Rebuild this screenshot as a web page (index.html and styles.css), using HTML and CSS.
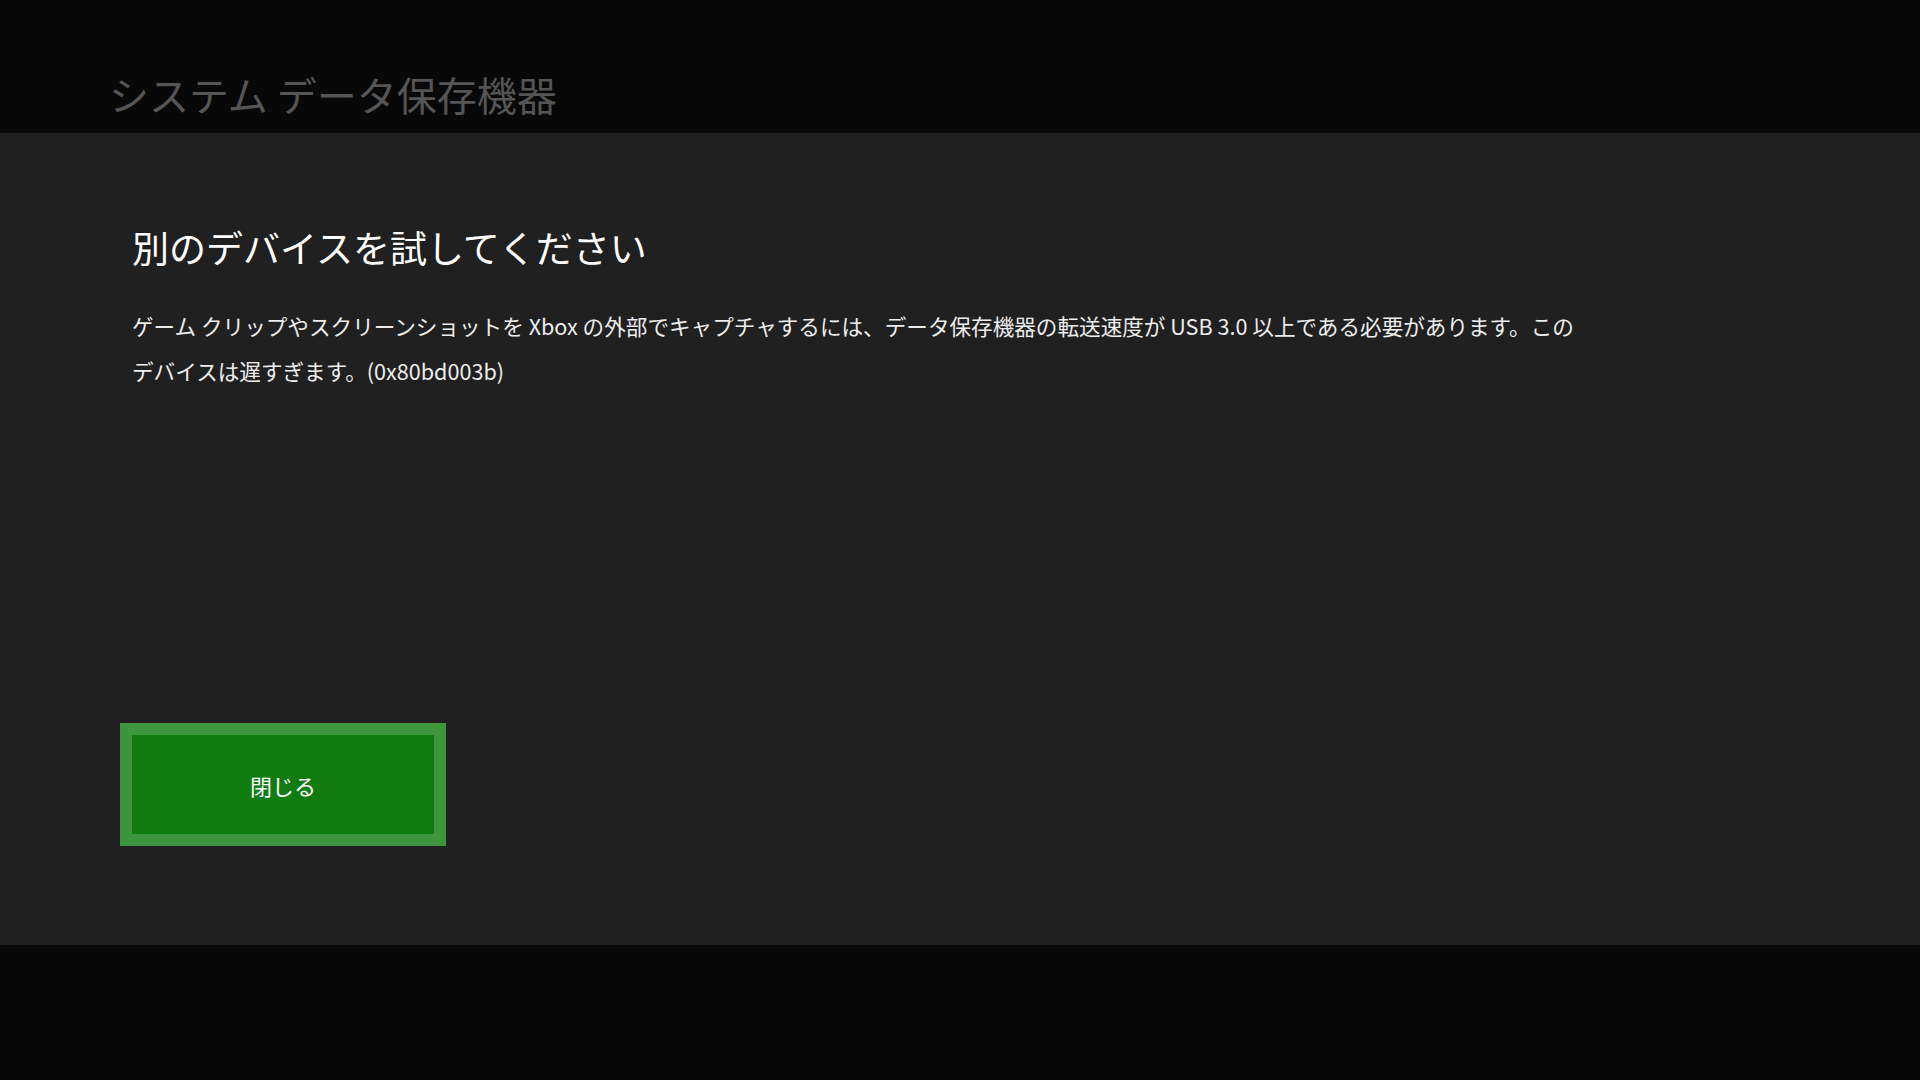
FILE: index.html
```html
<!DOCTYPE html>
<html lang="ja">
<head>
<meta charset="utf-8">
<title>システム データ保存機器</title>
<link rel="stylesheet" href="styles.css">
</head>
<body>
<div class="screen">
  <header class="topbar">
    <h1 class="page-title">システム データ保存機器</h1>
  </header>
  <main class="panel">
    <h2 class="dialog-title">別のデバイスを試してください</h2>
    <p class="dialog-text">ゲーム クリップやスクリーンショットを Xbox の外部でキャプチャするには、データ保存機器の転送速度が USB 3.0 以上である必要があります。この<br>デバイスは遅すぎます。(0x80bd003b)</p>
    <div class="actions">
      <button class="btn-close" type="button"><span class="btn-inner">閉じる</span></button>
    </div>
  </main>
  <footer class="bottombar"></footer>
</div>
</body>
</html>
```

FILE: styles.css
```css
* { box-sizing: border-box; }
html, body {
  margin: 0;
  padding: 0;
  width: 1920px;
  height: 1080px;
  background: #080808;
  overflow: hidden;
}
body {
  font-family: "Noto Sans CJK JP", "Noto Sans", sans-serif;
}
.screen {
  display: flex;
  flex-direction: column;
  width: 1920px;
  height: 1080px;
}
.topbar {
  height: 133px;
  flex: none;
  background: #080808;
  padding: 66px 0 0 109px;
}
.page-title {
  margin: 0;
  font-weight: 400;
  font-size: 40px;
  line-height: 56px;
  color: #555555;
  letter-spacing: 0;
}
.panel {
  height: 812px;
  flex: none;
  background: #202020;
  display: flex;
  flex-direction: column;
  padding: 88px 0 0 132px;
}
.dialog-title {
  margin: 0;
  font-weight: 400;
  font-size: 37px;
  line-height: 52px;
  color: #ffffff;
}
.dialog-text {
  margin: 30px 0 0 0;
  font-size: 21.6px;
  line-height: 45px;
  color: #ededed;
  width: 1620px;
}
.actions {
  flex: 1;
  display: flex;
  align-items: flex-start;
  padding-top: 330px;
}
.btn-close {
  margin-left: -12px;
  width: 326px;
  height: 123px;
  padding: 12px;
  border: 0;
  background: #3d963d;
  cursor: pointer;
  display: flex;
}
.btn-inner {
  flex: 1;
  background: #107c10;
  display: flex;
  align-items: center;
  justify-content: center;
  color: #ffffff;
  font-family: "Noto Sans CJK JP", "Noto Sans", sans-serif;
  font-size: 22px;
}
.bottombar {
  flex: 1;
  background: #080808;
}
```
